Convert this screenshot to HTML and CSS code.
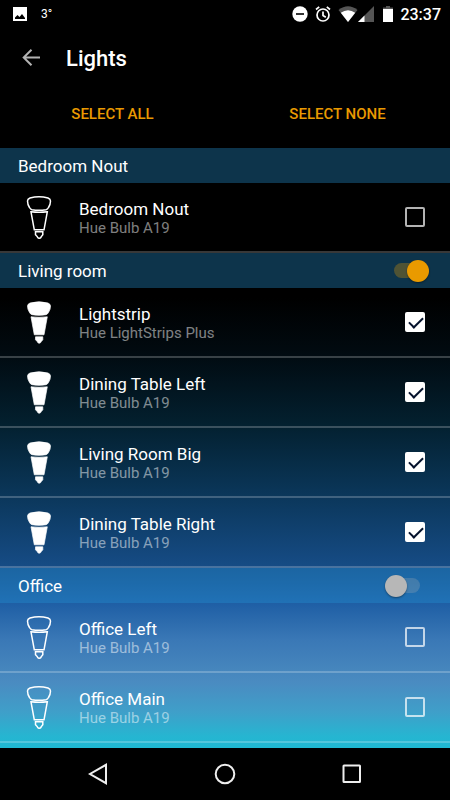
FILE: index.html
```html
<!DOCTYPE html>
<html lang="en">
<head>
    <meta charset="UTF-8">
    <meta name="viewport" content="width=device-width, initial-scale=1.0">
    <title>Lights</title>
    <link rel="stylesheet" href="styles.css">
</head>
<body>
    <svg class="sprites" aria-hidden="true">
        <symbol id="bulb" viewBox="0 0 26 44">
            <path d="M1.500 6 Q1.500 4 4 3 Q13 .5 22 3 Q24.500 4 24.500 6 Q24.500 9.500 22.500 12.500 Q21.500 14.300 20 14.700 Q13 16 6 14.700 Q4.500 14.300 3.500 12.500 Q1.500 9.500 1.500 6Z"/>
            <path d="M5 16.800 Q13 17.800 21.300 16.800 L18 34.800 H8.300Z"/>
            <path d="M9.500 36.800 H16.800 V39.800 L15.500 41.300 Q14.500 43.300 13.200 43.300 Q11.800 43.300 11 41.300 L9.500 39.800Z"/>
        </symbol>
    </svg>

    <div class="status-bar">
        <div class="status-left">
            <svg width="14" height="14" viewBox="0 0 14 14"><path fill="#fff" d="M0 0H14V14H0Z"/><path fill="#000" d="M2 12 V10.500 L4.500 8 L6.500 10 L9 7 L12 11 V12Z"/></svg>
            <span class="temp">3°</span>
        </div>
        <div class="status-right">
            <svg width="16" height="16" viewBox="0 0 16 16"><circle cx="8" cy="8" r="7.700" fill="#fff"/><path d="M4 8H12" stroke="#000" stroke-width="1.600"/></svg>
            <svg class="alarm" width="16" height="16" viewBox="0 0 16 16" fill="none" stroke="#fff" stroke-width="1.700"><circle cx="8" cy="9" r="6"/><path d="M8 5.500V9.500L10.800 11.200M1 3.500L4.200 .8M15 3.500L11.800 .8"/></svg>
            <svg width="20" height="16" viewBox="0 0 20 16"><path fill="#555" d="M10 16L.5 4Q10 -3.500 19.500 4Z"/><path fill="#fff" d="M10 16L2.800 6.800Q10 1.500 17.200 6.800Z"/></svg>
            <svg class="signal" width="16" height="16" viewBox="0 0 16 16"><path fill="#555" d="M16 0V16H0Z"/><path fill="#fff" d="M6.500 9.500V16H0Z"/></svg>
            <svg class="battery" width="10" height="16" viewBox="0 0 10 16"><path fill="#555" d="M3 0H7V1.500H10V4H0V1.500H3Z"/><path fill="#fff" d="M0 3H10V16H0Z"/></svg>
            <span class="clock">23:37</span>
        </div>
    </div>

    <header class="toolbar">
        <button aria-label="Back">
            <svg width="18" height="18" viewBox="0 0 18 18" fill="none" stroke="#b3b3b3" stroke-width="2"><path d="M9.500 .7L1.700 8.500L9.500 16.300M1.700 8.500H18"/></svg>
        </button>
        <h1>Lights</h1>
    </header>

    <div class="actions">
        <button>SELECT ALL</button>
        <button>SELECT NONE</button>
    </div>

    <main>
        <section>
            <div class="group">
                <h2>Bedroom Nout</h2>
            </div>
            <label class="light">
                <svg class="bulb"><use href="#bulb"/></svg>
                <span class="text"><span class="name">Bedroom Nout</span><span class="model">Hue Bulb A19</span></span>
                <input type="checkbox" class="check">
            </label>
        </section>

        <section>
            <div class="group">
                <h2 id="living">Living room</h2>
                <input type="checkbox" class="switch" aria-labelledby="living" checked>
            </div>
            <label class="light">
                <svg class="bulb filled"><use href="#bulb"/></svg>
                <span class="text"><span class="name">Lightstrip</span><span class="model">Hue LightStrips Plus</span></span>
                <input type="checkbox" class="check" checked>
            </label>
            <label class="light">
                <svg class="bulb filled"><use href="#bulb"/></svg>
                <span class="text"><span class="name">Dining Table Left</span><span class="model">Hue Bulb A19</span></span>
                <input type="checkbox" class="check" checked>
            </label>
            <label class="light">
                <svg class="bulb filled"><use href="#bulb"/></svg>
                <span class="text"><span class="name">Living Room Big</span><span class="model">Hue Bulb A19</span></span>
                <input type="checkbox" class="check" checked>
            </label>
            <label class="light">
                <svg class="bulb filled"><use href="#bulb"/></svg>
                <span class="text"><span class="name">Dining Table Right</span><span class="model">Hue Bulb A19</span></span>
                <input type="checkbox" class="check" checked>
            </label>
        </section>

        <section>
            <div class="group">
                <h2 id="office">Office</h2>
                <input type="checkbox" class="switch" aria-labelledby="office">
            </div>
            <label class="light">
                <svg class="bulb"><use href="#bulb"/></svg>
                <span class="text"><span class="name">Office Left</span><span class="model">Hue Bulb A19</span></span>
                <input type="checkbox" class="check">
            </label>
            <label class="light">
                <svg class="bulb"><use href="#bulb"/></svg>
                <span class="text"><span class="name">Office Main</span><span class="model">Hue Bulb A19</span></span>
                <input type="checkbox" class="check">
            </label>
        </section>
    </main>

    <nav class="nav-bar">
        <button aria-label="Back"><svg width="20" height="22" viewBox="0 0 20 22"><path d="M18 1.800V20.200L2 11Z"/></svg></button>
        <button aria-label="Home"><svg width="22" height="22" viewBox="0 0 22 22"><circle cx="11" cy="11" r="9.300"/></svg></button>
        <button aria-label="Recent apps"><svg width="20" height="20" viewBox="0 0 20 20"><rect x="1.500" y="1.500" width="16.500" height="16.500" rx=".5"/></svg></button>
    </nav>
</body>
</html>
```

FILE: styles.css
```css
* {
    box-sizing: border-box;
}
body {
    margin: 0;
    min-height: 100vh;
    display: flex;
    flex-direction: column;
    background: #000;
    color: #fff;
    font-family: Roboto, "Noto Sans", sans-serif;
}
h1, h2 {
    margin: 0;
}
button {
    padding: 0;
    border: none;
    background: none;
    color: inherit;
    font-family: inherit;
    cursor: pointer;
}
svg {
    display: block;
    flex: none;
}
.sprites {
    display: none;
}

/* status bar */
.status-bar {
    height: 28px;
    padding: 0 9px 0 13px;
    display: flex;
    justify-content: space-between;
    align-items: center;
}
.status-left, .status-right {
    display: flex;
    align-items: center;
}
.temp {
    margin-left: 14px;
    font-size: 12px;
}
.alarm {
    margin: 0 7px;
}
.battery {
    margin: 0 7px 0 9px;
}
.clock {
    font-size: 16px;
    font-weight: 500;
}

/* header */
.toolbar {
    height: 60px;
    padding-left: 22px;
    display: flex;
    align-items: center;
    gap: 26px;
}
.toolbar h1 {
    font-size: 22px;
    font-weight: 500;
}
.actions {
    display: grid;
    grid-template-columns: 1fr 1fr;
    padding-bottom: 8px;
}
.actions button {
    height: 52px;
    color: #e99a00;
    font-size: 15px;
    font-weight: 500;
}

/* light list */
main {
    flex: 1;
    background: linear-gradient(#000 25%, #010a10 34%, #03202f 46%, #0a3557 57%, #164c86 70%, #1f5fa5 76%, #3a78b6 82%, #4686bd 87%, #4a8bc1 89%, #3f9fc9 94%, #26b5d1 98%, #1fb9d2 100%);
}
.group {
    height: 35px;
    padding: 0 21px 0 18px;
    display: flex;
    align-items: center;
    justify-content: space-between;
    background: rgba(36, 150, 214, 0.35);
}
.group h2 {
    font-size: 17px;
    font-weight: 400;
}
.light {
    height: 70px;
    padding: 0 25px 0 26px;
    display: flex;
    align-items: center;
    border-bottom: 2px solid rgba(255, 255, 255, 0.22);
    cursor: pointer;
}
.bulb {
    width: 26px;
    height: 44px;
    fill: none;
    stroke: #fff;
    stroke-width: 1.5;
}
.bulb.filled {
    fill: #fff;
    stroke-width: 0.7;
}
.text {
    flex: 1;
    margin-left: 27px;
    padding-top: 4px;
    display: flex;
    flex-direction: column;
}
.name {
    font-size: 17px;
    line-height: 19px;
}
.model {
    font-size: 15px;
    line-height: 19px;
    color: rgba(255, 255, 255, 0.5);
}
.check {
    appearance: none;
    width: 20px;
    height: 20px;
    margin: 0;
    border: 2px solid rgba(255, 255, 255, 0.7);
    border-radius: 2px;
}
.check:checked {
    border-color: #fff;
    background: #fff;
}
.check:checked::before {
    content: "";
    display: block;
    width: 12px;
    height: 6px;
    margin: 3px 2px;
    border: solid #04122c;
    border-width: 0 0 2px 2px;
    transform: rotate(-45deg);
}

/* track and thumb share one grid cell */
.switch {
    appearance: none;
    width: 44px;
    height: 22px;
    margin: 0;
    display: grid;
    grid-template-areas: "switch";
    align-items: center;
}
.switch::before, .switch::after {
    content: "";
    grid-area: switch;
}
.switch::before {
    width: 26px;
    height: 15px;
    justify-self: center;
    border-radius: 8px;
    background: rgba(180, 180, 180, 0.25);
}
.switch::after {
    width: 22px;
    height: 22px;
    justify-self: start;
    border-radius: 50%;
    background: #b7b7b7;
    box-shadow: 0 1px 2px rgba(0, 0, 0, 0.4);
}
.switch:checked::before {
    background: rgba(233, 154, 0, 0.3);
}
.switch:checked::after {
    justify-self: end;
    background: #e99a00;
}

/* navigation */
.nav-bar {
    height: 52px;
    padding: 0 34px;
    display: grid;
    grid-template-columns: repeat(3, 1fr);
}
.nav-bar button {
    display: flex;
    align-items: center;
    justify-content: center;
}
.nav-bar svg {
    fill: none;
    stroke: #eee;
    stroke-width: 2;
}
```
